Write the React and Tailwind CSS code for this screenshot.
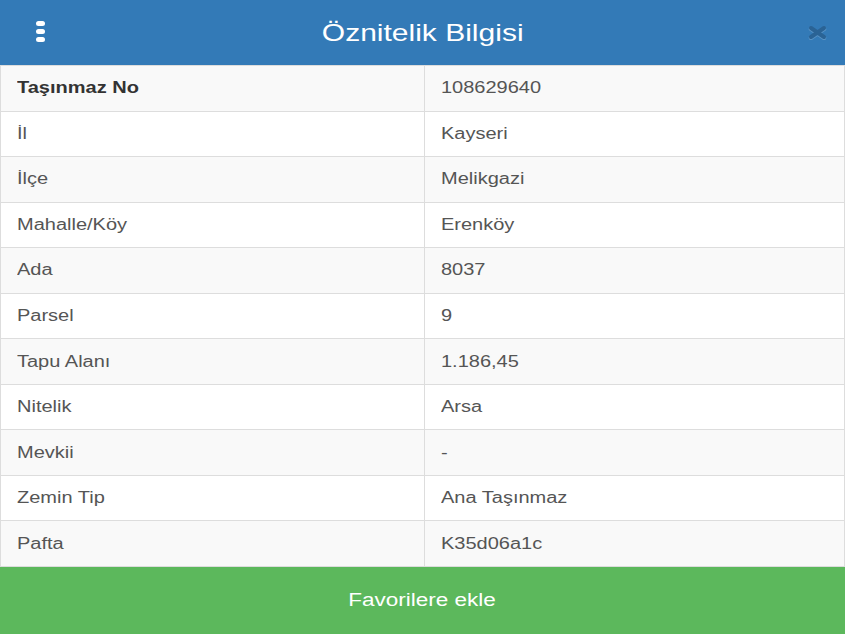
import React from "react";

const rows = [
    ["Taşınmaz No", "108629640", true],
    ["İl", "Kayseri"],
    ["İlçe", "Melikgazi"],
    ["Mahalle/Köy", "Erenköy"],
    ["Ada", "8037"],
    ["Parsel", "9"],
    ["Tapu Alanı", "1.186,45"],
    ["Nitelik", "Arsa"],
    ["Mevkii", "-"],
    ["Zemin Tip", "Ana Taşınmaz"],
    ["Pafta", "K35d06a1c"],
];

function Cell({ children, bold, first }) {
    return (
        <div className={`flex items-center px-4 ${first ? "w-[424px] border-r border-[#ddd]" : "flex-1"}`}>
            <span className={`inline-block origin-left scale-x-125 whitespace-nowrap text-[16px] ${bold ? "font-bold text-[#333]" : "text-[#555]"}`}>{children}</span>
        </div>
    );
}

export default function App() {
    return (
        <div className="flex h-[634px] w-[845px] flex-col bg-white" style={{ fontFamily: '"Liberation Sans", Arial, sans-serif' }}>
            {/* header */}
            <div className="relative flex h-[65px] shrink-0 items-center justify-center bg-[#337ab7]">
                <div className="absolute left-[36px] top-[21px] flex flex-col gap-[3px]">
                    <span className="block h-[5px] w-[9px] rounded-full bg-white" />
                    <span className="block h-[5px] w-[9px] rounded-full bg-white" />
                    <span className="block h-[5px] w-[9px] rounded-full bg-white" />
                </div>
                <span className="inline-block scale-x-125 text-[24px] text-white">Öznitelik Bilgisi</span>
                <svg className="absolute left-[807px] top-[25px]" width="21" height="15" viewBox="0 0 21 15">
                    <path d="M4 3 L17 12 M17 3 L4 12" stroke="#9fbfdc" strokeOpacity="0.35" strokeWidth="4.5" strokeLinecap="round" transform="translate(0 1)" />
                    <path d="M4 3 L17 12 M17 3 L4 12" stroke="#2a6395" strokeWidth="4" strokeLinecap="round" />
                </svg>
            </div>

            {/* table */}
            <div className="flex flex-1 flex-col border-x border-t border-[#ddd]">
                {rows.map(([label, value, bold], i) => (
                    <div key={label} className={`flex flex-1 border-b border-[#ddd] ${i % 2 === 0 ? "bg-[#f9f9f9]" : "bg-white"}`}>
                        <Cell first bold={bold}>{label}</Cell>
                        <Cell>{value}</Cell>
                    </div>
                ))}
            </div>

            {/* button */}
            <button className="flex h-[67px] shrink-0 items-center justify-center bg-[#5cb85c]">
                <span className="inline-block scale-x-125 text-[18px] text-white">Favorilere ekle</span>
            </button>
        </div>
    );
}
